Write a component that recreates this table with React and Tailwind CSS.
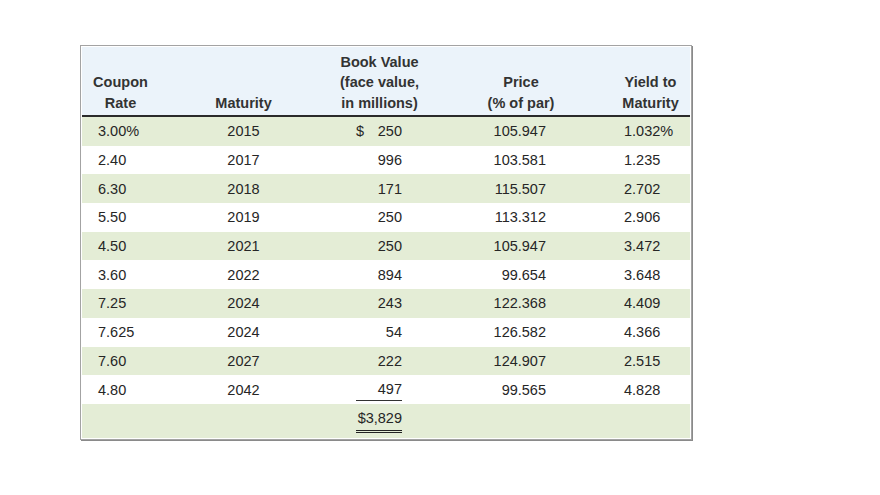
const rows = [
  ["3.00%", "2015", "250", "105.947", "1.032%"],
  ["2.40", "2017", "996", "103.581", "1.235"],
  ["6.30", "2018", "171", "115.507", "2.702"],
  ["5.50", "2019", "250", "113.312", "2.906"],
  ["4.50", "2021", "250", "105.947", "3.472"],
  ["3.60", "2022", "894", "99.654", "3.648"],
  ["7.25", "2024", "243", "122.368", "4.409"],
  ["7.625", "2024", "54", "126.582", "4.366"],
  ["7.60", "2027", "222", "124.907", "2.515"],
  ["4.80", "2042", "497", "99.565", "4.828"],
];

const cols = "grid grid-cols-[77px_169px_103px_180px_79px]";

export default function App() {
  return (
    <div className="w-[880px] h-[495px] bg-white font-['Liberation_Sans',Arial,sans-serif] text-[#262626] overflow-hidden">
      <div className="ml-[80px] mt-[45px] w-[612px] border border-[#a3a3a3] p-px bg-white shadow-[1px_1px_0_#8a8a8a]">
        {/* header */}
        <div className={`${cols} h-[70px] items-end pb-[2px] bg-[#ebf3fa] border-b-2 border-[#2a2a2a] text-[14.5px] leading-[20.5px] font-bold text-[#333] text-center`}>
          <div>Coupon<br />Rate</div>
          <div>Maturity</div>
          <div>Book Value<br />(face value,<br />in millions)</div>
          <div>Price<br />(% of par)</div>
          <div>Yield to<br />Maturity</div>
        </div>

        {rows.map((r, i) => (
          <div
            key={i}
            className={`${cols} h-[28.7px] items-center text-[14.5px] leading-[18px] ${i % 2 === 0 ? "bg-[#e4edd6]" : "bg-white"}`}
          >
            <div className="pl-[16px]">{r[0]}</div>
            <div className="text-center">{r[1]}</div>
            <div className="flex justify-end pr-[29px]">
              {i === 0 ? (
                <span className="w-[46px] flex justify-between">
                  <span>$</span>
                  <span>{r[2]}</span>
                </span>
              ) : i === rows.length - 1 ? (
                <span className="w-[46px] text-right mt-[2px] pb-[2px] border-b border-[#333]">{r[2]}</span>
              ) : (
                <span>{r[2]}</span>
              )}
            </div>
            <div className="text-right pr-[65px]">{r[3]}</div>
            <div className="pl-[13px]">{r[4]}</div>
          </div>
        ))}

        {/* total */}
        <div className={`${cols} h-[34px] items-start bg-[#e4edd6] text-[14.5px] leading-[18px]`}>
          <div />
          <div />
          <div className="flex justify-end pr-[29px] pt-[5px]">
            <span className="w-[46px] text-right pb-[3px] border-b-[3px] border-double border-[#222]">$3,829</span>
          </div>
          <div />
          <div />
        </div>
      </div>
    </div>
  );
}
